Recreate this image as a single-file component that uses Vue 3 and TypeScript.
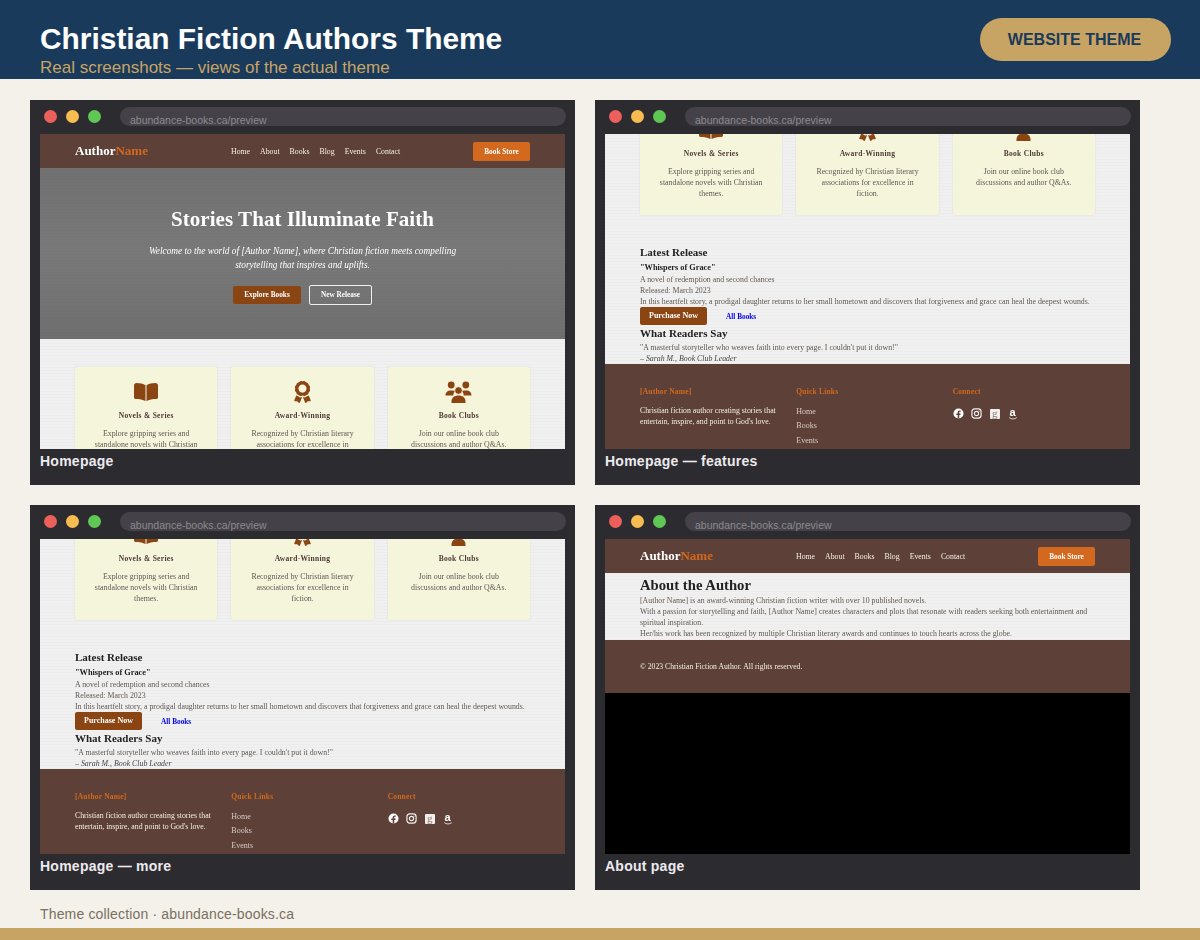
<script setup lang="ts">
const cards = [
  { label: 'Homepage', page: 'home', scroll: 0 },
  { label: 'Homepage — features', page: 'home', scroll: 262 },
  { label: 'Homepage — more', page: 'home', scroll: 262 },
  { label: 'About page', page: 'about', scroll: 0 },
]
const links = ['Home', 'About', 'Books', 'Blog', 'Events', 'Contact']
const features = [
  { icon: 'book', title: 'Novels & Series', lines: ['Explore gripping series and', 'standalone novels with Christian', 'themes.'] },
  { icon: 'award', title: 'Award-Winning', lines: ['Recognized by Christian literary', 'associations for excellence in', 'fiction.'] },
  { icon: 'users', title: 'Book Clubs', lines: ['Join our online book club', 'discussions and author Q&As.'] },
]
</script>

<template>
  <div class="page">
    <header class="top">
      <div class="heading">
        <h1>Christian Fiction Authors Theme</h1>
        <p>Real screenshots — views of the actual theme</p>
      </div>
      <div class="badge">WEBSITE THEME</div>
    </header>

    <main class="gallery">
      <section v-for="card in cards" :key="card.label" class="frame">
        <div class="chrome">
          <span class="dot red"></span>
          <span class="dot yellow"></span>
          <span class="dot green"></span>
          <div class="url">abundance-books.ca/preview</div>
        </div>

        <div class="shot">
          <div class="site" :style="{ marginTop: -card.scroll + 'px' }">
            <nav class="nav">
              <div class="logo">Author<span>Name</span></div>
              <div class="links">
                <span v-for="l in links" :key="l">{{ l }}</span>
              </div>
              <div class="store">Book Store</div>
            </nav>

            <template v-if="card.page === 'home'">
              <div class="hero">
                <h2>Stories That Illuminate Faith</h2>
                <p>Welcome to the world of [Author Name], where Christian fiction meets compelling<br />storytelling that inspires and uplifts.</p>
                <div class="hero-btns">
                  <span class="btn solid">Explore Books</span>
                  <span class="btn ghost">New Release</span>
                </div>
              </div>

              <div class="paper home-body">
                <div class="features">
                  <div v-for="f in features" :key="f.title" class="feature">
                    <svg v-if="f.icon === 'book'" class="ficon" viewBox="0 -2 24 22" width="24" height="22">
                      <path d="M0 2.300C0 1 1 0 2.600 0c3.400 0 6.800.7 8.900 2.200V18c-2.400-1.500-6.200-2.100-9.900-2.100C.7 15.900 0 15.200 0 14.300z" />
                      <path d="M24 2.300C24 1 23 0 21.400 0c-3.400 0-6.800.7-8.900 2.200V18c2.400-1.500 6.200-2.100 9.900-2.100.9 0 1.600-.7 1.600-1.600z" />
                    </svg>
                    <svg v-else-if="f.icon === 'award'" class="ficon" viewBox="0 0 384 512" width="17" height="22">
                      <path d="M97.12 362.63c-8.69-8.69-4.16-6.24-25.12-11.85-9.51-2.55-17.87-7.45-25.43-13.32L1.2 448.7c-4.39 10.77 3.81 22.47 15.43 22.03l52.69-2.01L105.56 507c8 8.44 22.04 5.81 26.43-4.96l52.05-127.62c-10.84 6.04-22.87 9.58-35.31 9.58-19.5 0-37.82-7.59-51.61-21.37zM382.8 448.7l-45.37-111.24c-7.56 5.88-15.92 10.77-25.43 13.32-21.07 5.64-16.45 3.18-25.12 11.85-13.79 13.78-32.12 21.37-51.62 21.37-12.44 0-24.47-3.55-35.31-9.58L252 502.04c4.39 10.77 18.44 13.4 26.43 4.96l36.25-38.28 52.69 2.01c11.62.44 19.82-11.27 15.43-22.03zM263 340c15.28-15.55 17.03-14.21 38.79-20.14 13.89-3.79 24.75-14.84 28.47-28.98 7.48-28.4 5.54-24.97 25.95-45.75 10.17-10.35 14.14-25.44 10.42-39.58-7.47-28.38-7.48-24.42 0-52.83 3.72-14.14-.25-29.23-10.42-39.58-20.41-20.78-18.47-17.36-25.95-45.75-3.72-14.14-14.58-25.19-28.47-28.98-27.88-7.61-24.52-5.62-44.95-26.41-10.17-10.35-25-14.4-38.89-10.61-27.87 7.6-23.98 7.61-51.9 0-13.89-3.79-28.72.25-38.89 10.61-20.41 20.78-17.05 18.8-44.94 26.41-13.89 3.79-24.75 14.84-28.47 28.98-7.47 28.39-5.54 24.97-25.95 45.75-10.17 10.35-14.15 25.44-10.42 39.58 7.47 28.36 7.48 24.4 0 52.82-3.72 14.14.25 29.23 10.42 39.59 20.41 20.78 18.47 17.35 25.95 45.75 3.72 14.14 14.58 25.19 28.47 28.98C104.6 325.96 106.27 325 121 340c13.23 13.47 33.84 15.88 49.74 5.82a39.676 39.676 0 0 1 42.53 0c15.89 10.06 36.5 7.65 49.73-5.82zM97.66 175.96c0-53.03 42.24-96.02 94.34-96.02s94.34 42.99 94.34 96.02-42.24 96.02-94.34 96.02-94.34-42.99-94.34-96.02z" />
                    </svg>
                    <svg v-else class="ficon" viewBox="0 0 27 22" width="27" height="22">
                      <circle cx="6.200" cy="4" r="3.400" />
                      <circle cx="20.800" cy="4" r="3.400" />
                      <path d="M.5 14.500c0-3 2-5 5-5h2c1 0 2 .3 2.700 1-1.500 1-2 2.600-1.800 4z" />
                      <path d="M26.500 14.500c0-3-2-5-5-5h-2c-1 0-2 .3-2.700 1 1.500 1 2 2.600 1.800 4z" />
                      <circle cx="13.500" cy="9.500" r="3.800" stroke="#f5f5dc" stroke-width=".8" />
                      <path d="M6.500 22v-1.500c0-4 3-6 7-6s7 2 7 6V22z" />
                    </svg>
                    <h3>{{ f.title }}</h3>
                    <div class="desc">
                      <div v-for="line in f.lines" :key="line">{{ line }}</div>
                    </div>
                  </div>
                </div>

                <h2 class="sec">Latest Release</h2>
                <div class="book">"Whispers of Grace"</div>
                <p>A novel of redemption and second chances</p>
                <p>Released: March 2023</p>
                <p>In this heartfelt story, a prodigal daughter returns to her small hometown and discovers that forgiveness and grace can heal the deepest wounds.</p>
                <div class="actions">
                  <span class="btn solid buy">Purchase Now</span>
                  <span class="all">All Books</span>
                </div>
                <h2 class="sec">What Readers Say</h2>
                <p>"A masterful storyteller who weaves faith into every page. I couldn't put it down!"</p>
                <p class="cite">– Sarah M., Book Club Leader</p>
              </div>

              <footer class="foot">
                <div class="fcol">
                  <h4>[Author Name]</h4>
                  <p class="blurb">Christian fiction author creating stories that entertain, inspire, and point to God's love.</p>
                </div>
                <div class="fcol">
                  <h4>Quick Links</h4>
                  <div class="flink">Home</div>
                  <div class="flink">Books</div>
                  <div class="flink">Events</div>
                </div>
                <div class="fcol">
                  <h4>Connect</h4>
                  <div class="social">
                    <svg viewBox="0 0 12 12" width="11" height="11">
                      <circle cx="6" cy="6" r="5.500" fill="#fff" />
                      <path d="M6.800 11.500V7.600h1.300l.3-1.600H6.800V5c0-.500.200-.9.900-.9h.8V2.700c-.400-.100-.900-.100-1.300-.100-1.300 0-2.100.800-2.100 2.200V6H3.600v1.600h1.500v3.900z" fill="#5d4037" />
                    </svg>
                    <svg viewBox="0 0 12 12" width="11" height="11" fill="none" stroke="#f2eeee">
                      <rect x="1" y="1" width="10" height="10" rx="3" stroke-width="1.300" />
                      <circle cx="6" cy="6" r="2.300" stroke-width="1.200" />
                      <circle cx="8.800" cy="3.200" r=".6" fill="#fff" stroke="none" />
                    </svg>
                    <span class="gr">g</span>
                    <span class="amz">a<svg viewBox="0 0 12 4" width="10" height="3"><path d="M1 .8c3 2.400 7 2.400 10 0" fill="none" stroke="#fff" stroke-width="1" /></svg></span>
                  </div>
                </div>
              </footer>
            </template>

            <template v-else>
              <div class="paper about">
                <h2>About the Author</h2>
                <p>[Author Name] is an award-winning Christian fiction writer with over 10 published novels.</p>
                <p>With a passion for storytelling and faith, [Author Name] creates characters and plots that resonate with readers seeking both entertainment and spiritual inspiration.</p>
                <p>Her/his work has been recognized by multiple Christian literary awards and continues to touch hearts across the globe.</p>
              </div>
              <footer class="foot-small">© 2023 Christian Fiction Author. All rights reserved.</footer>
            </template>
          </div>
        </div>

        <div class="caption">{{ card.label }}</div>
      </section>
    </main>

    <div class="credit">Theme collection · abundance-books.ca</div>
    <div class="strip"></div>
  </div>
</template>

<style>
html, body { margin: 0; background: #f4f1ea; }
</style>

<style scoped>
.page {
  width: 1200px;
  height: 940px;
  overflow: hidden;
  background: #f4f1ea;
  font-family: "Liberation Sans", Arial, sans-serif;
  display: flex;
  flex-direction: column;
}
.top {
  height: 79px;
  flex: none;
  box-sizing: border-box;
  background: #1a3a5c;
  padding: 18px 29px 0 40px;
  display: flex;
  justify-content: space-between;
  align-items: flex-start;
}
.heading h1 {
  margin: 4px 0 0;
  color: #fff;
  font-size: 29.900px;
  line-height: 34px;
  font-weight: 700;
}
.heading p {
  margin: 2px 0 0;
  color: #c8a464;
  font-size: 17px;
  line-height: 20px;
}
.badge {
  width: 191px;
  height: 43px;
  border-radius: 22px;
  background: #c8a464;
  color: #1a3a5c;
  font-size: 16px;
  font-weight: 700;
  display: flex;
  align-items: center;
  justify-content: center;
  padding-right: 2px;
  box-sizing: border-box;
}
.gallery {
  padding: 21px 0 0 30px;
  display: grid;
  grid-template-columns: 545px 545px;
  grid-auto-rows: 385px;
  gap: 20px;
}
.frame {
  background: #2c2c30;
  display: flex;
  flex-direction: column;
  padding: 0 10px;
}
.chrome {
  height: 33px;
  margin-bottom: 1px;
  flex: none;
  display: flex;
  align-items: center;
  margin-right: -1px;
  padding-left: 4px;
  gap: 9px;
}
.dot { width: 13px; height: 13px; border-radius: 50%; flex: none; }
.red { background: #ed5f5a; }
.yellow { background: #f8bd50; }
.green { background: #5fc754; }
.url {
  margin-left: 10px;
  flex: 1;
  height: 19px;
  box-sizing: border-box;
  border-radius: 10px;
  background: #444248;
  color: #8c8a90;
  font-size: 10.500px;
  line-height: 27px;
  padding-left: 10px;
  overflow: hidden;
  white-space: nowrap;
}
.shot {
  width: 525px;
  height: 315px;
  flex: none;
  overflow: hidden;
  background: #000;
  font-family: "Liberation Serif", "Times New Roman", serif;
}
.site { width: 525px; filter: blur(.22px); }
.nav {
  height: 34px;
  box-sizing: border-box;
  background: #5d4037;
  padding: 0 35px;
  display: flex;
  align-items: center;
}
.logo {
  width: 156px;
  flex: none;
  color: #fff;
  font-size: 13px;
  font-weight: 700;
}
.logo span { color: #d2691e; }
.links {
  display: flex;
  gap: 10px;
  color: #f5efe6;
  font-size: 7.800px;
}
.store {
  margin-left: auto;
  width: 57px;
  height: 19px;
  box-sizing: border-box;
  background: #d2691e;
  border-radius: 2px;
  color: #fff;
  font-size: 7.300px;
  font-weight: 700;
  text-align: center;
  line-height: 19px;
}
.hero {
  height: 171px;
  box-sizing: border-box;
  padding-top: 38px;
  text-align: center;
  color: #fff;
  background-color: #757575;
  background-image:
    repeating-linear-gradient(0deg, rgba(0,0,0,.02) 0 1px, transparent 1px 3px),
    linear-gradient(#717171, #797979 50%, #6f6f6f);
}
.hero h2 {
  margin: 0;
  font-size: 21px;
  line-height: 26px;
  font-weight: 700;
  letter-spacing: .05px;
}
.hero p {
  margin: 12px 0 0;
  font-size: 9.300px;
  line-height: 14px;
  font-style: italic;
}
.hero-btns {
  margin-top: 13px;
  display: flex;
  justify-content: center;
  align-items: center;
  gap: 8px;
}
.btn {
  display: block;
  box-sizing: border-box;
  font-size: 7.300px;
  font-weight: 700;
  color: #fff;
  text-align: center;
  border-radius: 2px;
}
.solid { background: #8b4513; width: 68px; height: 18px; line-height: 18px; }
.ghost { width: 63px; height: 20px; line-height: 18px; border: 1px solid #f0f0f0; }
.paper {
  background-color: #f0f0f0;
  background-image:
    repeating-linear-gradient(0deg, rgba(0,0,0,.014) 0 1px, transparent 1px 3px);
  color: #5f5852;
  font-size: 7.850px;
  line-height: 11px;
}
.paper p { margin: 0; }
.home-body {
  height: 287px;
  box-sizing: border-box;
  padding: 28px 35px 0;
}
.features {
  display: grid;
  grid-template-columns: repeat(3, 1fr);
  gap: 14px;
  margin-bottom: 30px;
}
.feature {
  height: 110px;
  box-sizing: border-box;
  padding-top: 14px;
  background: #f5f5dc;
  border-radius: 2px;
  box-shadow: 0 0 2px rgba(0,0,0,.1);
  text-align: center;
}
.ficon { display: block; margin: 0 auto; fill: #8b4513; }
.feature h3 {
  margin: 8px 0 0;
  color: #4e3a34;
  font-size: 7.500px;
  line-height: 10px;
  font-weight: 700;
  letter-spacing: .3px;
}
.desc { margin-top: 7px; }
.sec {
  margin: 0;
  color: #222;
  font-size: 11px;
  line-height: 14px;
  font-weight: 700;
}
.book {
  margin: 2.500px 0 1px;
  color: #222;
  font-size: 8.300px;
  line-height: 11px;
  font-weight: 700;
}
.actions {
  margin-top: .5px;
  margin-bottom: 1px;
  display: flex;
  align-items: center;
  height: 18px;
}
.buy { width: 67px; font-size: 8px; }
.all {
  margin-left: 19px;
  color: #0000ee;
  font-size: 7.300px;
  font-weight: 700;
}
.cite { font-style: italic; color: #444; }
.sec + p { margin-top: 1.500px; }
.foot {
  height: 120px;
  box-sizing: border-box;
  background: #5d4037;
  padding: 23px 35px 0;
  display: grid;
  grid-template-columns: repeat(3, 1fr);
  gap: 14px;
}
.fcol h4 {
  margin: 0 0 8px;
  color: #d2691e;
  font-size: 7.500px;
  line-height: 10px;
  font-weight: 700;
  letter-spacing: .2px;
}
.blurb {
  margin: 0;
  color: #f5efe0;
  font-size: 7.800px;
  line-height: 11px;
}
.flink {
  color: #d7ccc8;
  font-size: 8px;
  line-height: 11px;
  margin-bottom: 3.500px;
}
.fcol h4 + .flink { margin-top: 8.500px; }
.social {
  display: flex;
  align-items: center;
  gap: 7.500px;
  height: 11px;
  margin-top: 11px;
}
.social svg { display: block; flex: none; }
.gr {
  width: 10px;
  height: 10px;
  background: #f2eeee;
  border-radius: 1px;
  color: #8a7a70;
  font-size: 11px;
  line-height: 8px;
  text-align: center;
}
.amz {
  color: #fff;
  font-family: "Liberation Sans", sans-serif;
  font-size: 11px;
  font-weight: 700;
  line-height: 9px;
  width: 10px;
  margin-left: .5px;
  text-align: center;
  display: flex;
  flex-direction: column;
  align-items: center;
}
.about {
  height: 67px;
  box-sizing: border-box;
  padding: 3px 35px 0;
}
.about h2 {
  margin: 0 0 1px;
  color: #222;
  font-size: 14.700px;
  line-height: 19px;
  font-weight: 700;
}
.about p { line-height: 10.900px; }
.foot-small {
  height: 53px;
  box-sizing: border-box;
  background: #5d4037;
  padding: 21px 35px 0;
  color: #f5efe0;
  font-size: 7.700px;
  line-height: 11px;
}
.caption {
  height: 36px;
  flex: none;
  box-sizing: border-box;
  padding-top: 4px;
  color: #eceaee;
  font-size: 14px;
  line-height: 16px;
  font-weight: 700;
  letter-spacing: .25px;
}
.credit {
  margin: 16px 0 0 40px;
  color: #7a6f60;
  font-size: 14px;
  line-height: 16px;
  letter-spacing: .16px;
}
.strip {
  margin-top: auto;
  height: 12px;
  flex: none;
  background: #c8a464;
}
</style>
